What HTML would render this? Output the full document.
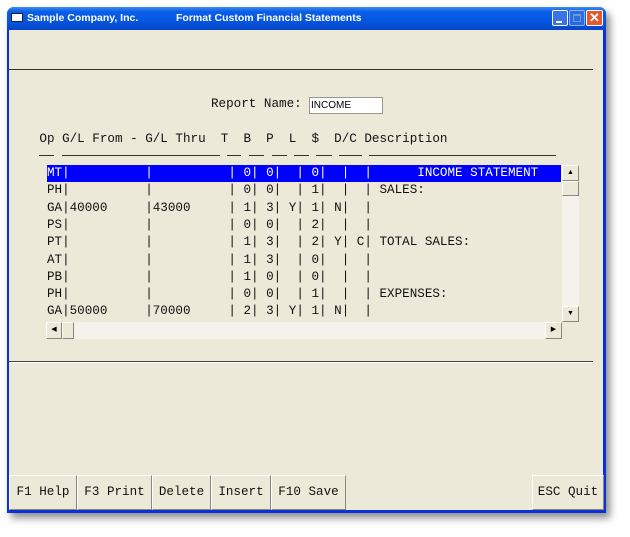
<!DOCTYPE html>
<html><head><style>
*{margin:0;padding:0;box-sizing:border-box}
body{width:630px;height:537px;background:#fff;position:relative;overflow:hidden;font-family:"Liberation Sans",sans-serif}
.abs{position:absolute}
.win{left:7px;top:7px;width:599px;height:506px;background:#0831d9;border-radius:7px 7px 0 0;box-shadow:4px 5px 8px rgba(0,0,0,.45)}
.title{left:7px;top:7px;width:599px;height:23px;border-radius:7px 7px 0 0;background:linear-gradient(#3d8cf5,#0a5ee6 20%,#0556e0 60%,#0646c8);}
.tt{color:#fff;font-size:10.5px;font-weight:bold;top:12px;letter-spacing:0}
.body{left:9px;top:30px;width:594px;height:480px;background:#ece9d8}
.mono{font-family:"Liberation Mono",monospace;font-size:12.6px;white-space:pre;color:#111}
.row{left:39.4px;height:17.3px;line-height:17.3px}
.ul{height:1px;background:#333;top:155px}
.btn{top:475px;height:35px;background:#ece9d8;border:1px solid;border-color:#fff #8a877a #8a877a #fff;font-family:"Liberation Mono",monospace;font-size:12.6px;line-height:33px;text-align:center;color:#111}
.sb{background:#ece9d8;border:1px solid;border-color:#fff #8a877a #8a877a #fff}
</style></head><body>
<div class="abs win"></div>
<div class="abs title"></div>
<div class="abs" style="left:11px;top:13px;width:12px;height:9px;background:#fff;border:1px solid #123"></div>
<div class="abs tt" style="left:27px">Sample Company, Inc.</div>
<div class="abs tt" style="left:176px">Format Custom Financial Statements</div>
<div class="abs" style="left:552px;top:10px;width:16px;height:16px;background:#3a73e8;border:1px solid #fff;border-radius:2px"><div class="abs" style="left:3px;top:10px;width:6px;height:2px;background:#fff"></div></div>
<div class="abs" style="left:569px;top:10px;width:16px;height:16px;background:#3a73e8;border:1px solid #c8d6f5;border-radius:2px;opacity:.7"><div class="abs" style="left:3px;top:3px;width:8px;height:8px;border:1px solid #9bb;border-top-width:2px"></div></div>
<div class="abs" style="left:586px;top:10px;width:17px;height:16px;background:#e2582f;border:1px solid #fff;border-radius:2px;color:#fff;font-size:13px;font-weight:bold;line-height:14px;text-align:center">✕</div>
<div class="abs body"></div>
<div class="abs" style="left:9px;top:69px;width:584px;height:1px;background:#333"></div>
<div class="abs" style="left:9px;top:361px;width:584px;height:2px;background:#444;border-bottom:1px solid #fff"></div>

<div class="abs mono" style="left:211px;top:96px;line-height:17px">Report Name:</div>
<div class="abs" style="left:309px;top:97px;width:74px;height:17px;background:#fff;border:1px solid #9a988c;font-size:10px;line-height:15px;padding-left:1px;color:#000">INCOME</div>

<div class="abs mono row" style="top:131px">Op G/L From - G/L Thru  T  B  P  L  $  D/C Description</div>
<div class="abs ul" style="left:39px;width:15px"></div>
<div class="abs ul" style="left:62px;width:158px"></div>
<div class="abs ul" style="left:227px;width:14px"></div>
<div class="abs ul" style="left:249px;width:15px"></div>
<div class="abs ul" style="left:272px;width:15px"></div>
<div class="abs ul" style="left:294px;width:15px"></div>
<div class="abs ul" style="left:316px;width:16px"></div>
<div class="abs ul" style="left:339px;width:23px"></div>
<div class="abs ul" style="left:369px;width:187px"></div>

<div class="abs" style="left:46px;top:164px;width:533px;height:175px;background:#ece9d8"></div>
<div class="abs" style="left:47px;top:165px;width:514px;height:17px;background:#0000ff"></div>
<div class="abs mono row" style="top:165px;color:#fff"> MT|          |          | 0| 0|  | 0|  |  |      INCOME STATEMENT</div>
<div class="abs mono row" style="top:182.3px"> PH|          |          | 0| 0|  | 1|  |  | SALES:</div>
<div class="abs mono row" style="top:199.6px"> GA|40000     |43000     | 1| 3| Y| 1| N|  |</div>
<div class="abs mono row" style="top:216.9px"> PS|          |          | 0| 0|  | 2|  |  |</div>
<div class="abs mono row" style="top:234.2px"> PT|          |          | 1| 3|  | 2| Y| C| TOTAL SALES:</div>
<div class="abs mono row" style="top:251.5px"> AT|          |          | 1| 3|  | 0|  |  |</div>
<div class="abs mono row" style="top:268.8px"> PB|          |          | 1| 0|  | 0|  |  |</div>
<div class="abs mono row" style="top:286.1px"> PH|          |          | 0| 0|  | 1|  |  | EXPENSES:</div>
<div class="abs mono row" style="top:303.4px"> GA|50000     |70000     | 2| 3| Y| 1| N|  |</div>

<div class="abs" style="left:562px;top:165px;width:17px;height:157px;background:#f4f2ea"></div>
<div class="abs sb" style="left:562px;top:165px;width:17px;height:16px;font-size:7px;text-align:center;line-height:13px">▲</div>
<div class="abs sb" style="left:562px;top:181px;width:17px;height:15px"></div>
<div class="abs sb" style="left:562px;top:306px;width:17px;height:16px;font-size:7px;text-align:center;line-height:14px">▼</div>
<div class="abs" style="left:46px;top:322px;width:516px;height:17px;background:#f4f2ea"></div>
<div class="abs sb" style="left:46px;top:322px;width:16px;height:17px;font-size:7px;text-align:center;line-height:14px">◀</div>
<div class="abs sb" style="left:62px;top:322px;width:12px;height:17px"></div>
<div class="abs sb" style="left:545px;top:322px;width:17px;height:17px;font-size:7px;text-align:center;line-height:14px">▶</div>

<div class="abs btn" style="left:9px;width:68px">F1 Help</div>
<div class="abs btn" style="left:77px;width:75px">F3 Print</div>
<div class="abs btn" style="left:152px;width:59px">Delete</div>
<div class="abs btn" style="left:211px;width:60px">Insert</div>
<div class="abs btn" style="left:271px;width:75px">F10 Save</div>
<div class="abs btn" style="left:532px;width:72px">ESC Quit</div>
</body></html>
